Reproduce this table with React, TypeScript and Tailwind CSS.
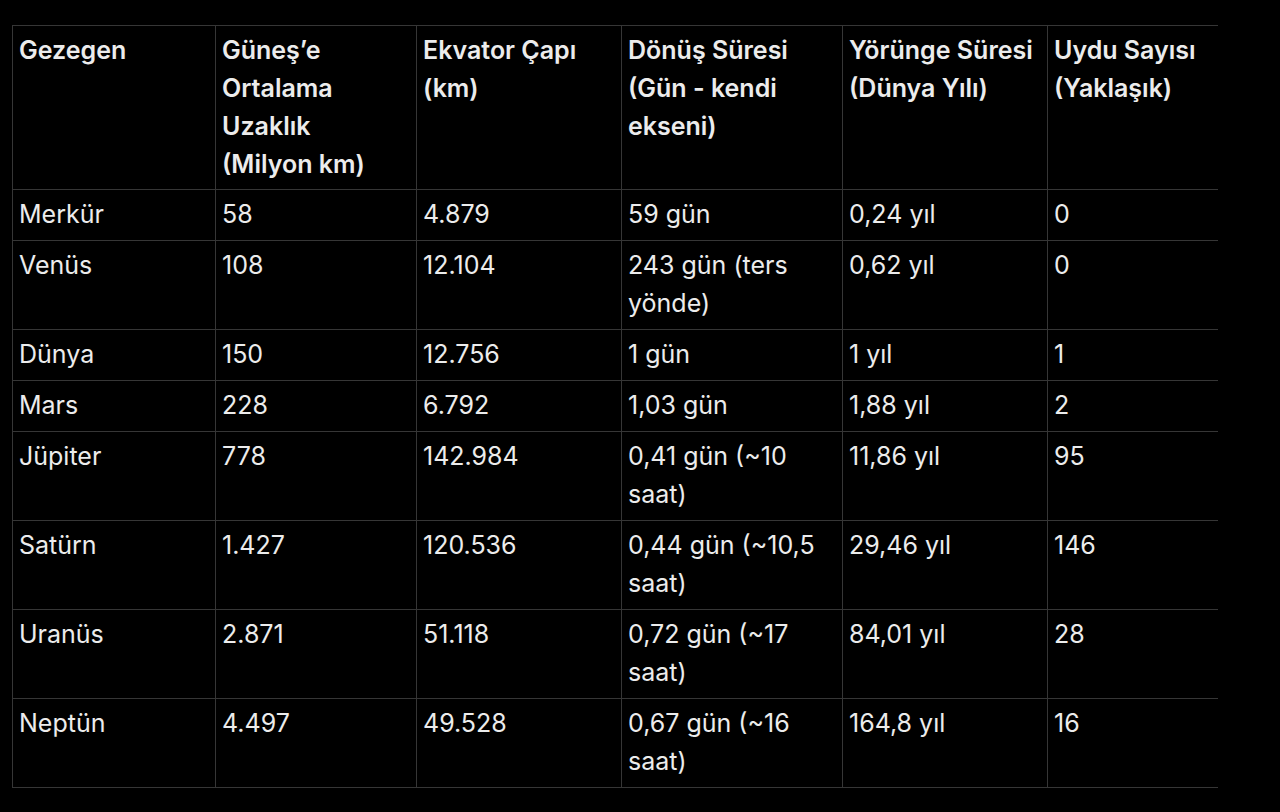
const headers: string[][] = [
  ['Gezegen'],
  ['Güneş’e', 'Ortalama', 'Uzaklık', '(Milyon km)'],
  ['Ekvator Çapı', '(km)'],
  ['Dönüş Süresi', '(Gün - kendi', 'ekseni)'],
  ['Yörünge Süresi', '(Dünya Yılı)'],
  ['Uydu Sayısı', '(Yaklaşık)'],
];

const rows: string[][][] = [
  [['Merkür'], ['58'], ['4.879'], ['59 gün'], ['0,24 yıl'], ['0']],
  [['Venüs'], ['108'], ['12.104'], ['243 gün (ters', 'yönde)'], ['0,62 yıl'], ['0']],
  [['Dünya'], ['150'], ['12.756'], ['1 gün'], ['1 yıl'], ['1']],
  [['Mars'], ['228'], ['6.792'], ['1,03 gün'], ['1,88 yıl'], ['2']],
  [['Jüpiter'], ['778'], ['142.984'], ['0,41 gün (~10', 'saat)'], ['11,86 yıl'], ['95']],
  [['Satürn'], ['1.427'], ['120.536'], ['0,44 gün (~10,5', 'saat)'], ['29,46 yıl'], ['146']],
  [['Uranüs'], ['2.871'], ['51.118'], ['0,72 gün (~17', 'saat)'], ['84,01 yıl'], ['28']],
  [['Neptün'], ['4.497'], ['49.528'], ['0,67 gün (~16', 'saat)'], ['164,8 yıl'], ['16']],
];

const widths = ['w-[203px]', 'w-[201px]', 'w-[205px]', 'w-[221px]', 'w-[205px]', 'w-[170px]'];

const Lines = ({ lines }: { lines: string[] }) => (
  <>
    {lines.map((line, i) => (
      <div key={i} className="whitespace-nowrap">
        {line}
      </div>
    ))}
  </>
);

export default function App() {
  return (
    <div className="min-h-screen bg-black pl-3 pt-[25px] font-['Inter',sans-serif] text-[25px] leading-[38px] text-[#ececec]">
      <table className="table-fixed border-collapse border-l border-[#363636]">
        <colgroup>
          {widths.map((w, i) => (
            <col key={i} className={w} />
          ))}
        </colgroup>
        <thead>
          <tr className="border-y border-[#363636]">
            {headers.map((h, i) => (
              <th
                key={i}
                className={`pl-[6px] pr-2 pt-[5px] pb-[6px] text-left align-top font-semibold ${
                  i < headers.length - 1 ? 'border-r border-[#363636]' : ''
                }`}
              >
                <Lines lines={h} />
              </th>
            ))}
          </tr>
        </thead>
        <tbody>
          {rows.map((row, r) => (
            <tr key={r} className="border-b border-[#363636]">
              {row.map((cell, c) => (
                <td
                  key={c}
                  className={`pl-[6px] pr-2 pt-[5px] pb-[7px] align-top ${
                    c < row.length - 1 ? 'border-r border-[#363636]' : ''
                  }`}
                >
                  <Lines lines={cell} />
                </td>
              ))}
            </tr>
          ))}
        </tbody>
      </table>
    </div>
  );
}
